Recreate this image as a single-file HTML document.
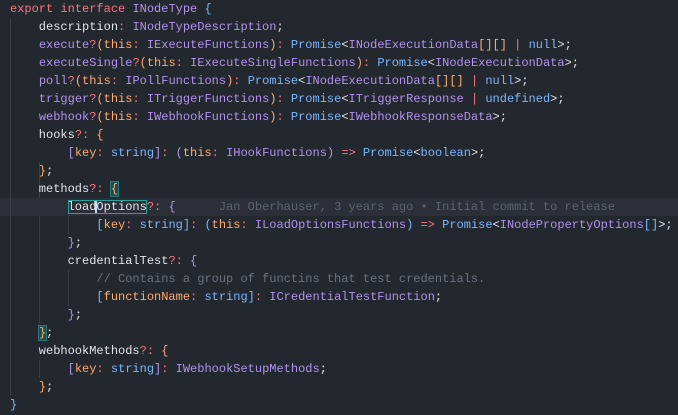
<!DOCTYPE html>
<html><head><style>
html,body{margin:0;padding:0;background:#23272e;width:678px;height:415px;overflow:hidden}
pre{margin:0;padding:0 0 0 10px;font-family:"Liberation Mono",monospace;font-size:12px;line-height:18px;color:#e1e4e8;position:relative}
.k{color:#f97583}.t{color:#b392f0}.b{color:#79b8ff}.o{color:#ffab70}.p{color:#b392f0}.c{color:#6a737d}.g{color:#5c6370}
.hl{position:absolute;left:0;top:198px;width:678px;height:18px;background:#2b3038}
.g1{position:absolute;width:1px;background:#3a3f47}
.cur{outline:1px solid #2aa198;outline-offset:-1px}
.caret{border-left:2px solid #c8d8ff;margin-left:-1px;margin-right:-1px}
.bm{background:#1f4d4d;outline:1px solid #2a7a7a}
</style></head><body>
<div class="hl"></div>
<div class="g1" style="left:10px;top:18px;height:378px"></div>
<div class="g1" style="left:39px;top:162px;height:36px"></div>
<div class="g1" style="left:68px;top:216px;height:18px"></div>
<div class="g1" style="left:68px;top:270px;height:36px"></div>
<div class="g1" style="left:39px;top:216px;height:108px"></div>
<div class="g1" style="left:39px;top:360px;height:18px"></div>
<pre><span class="k">export</span> <span class="k">interface</span> <span class="t">INodeType</span> <span class="b">{</span>
    description<span class="k">:</span> <span class="t">INodeTypeDescription</span>;
    <span class="t">execute</span><span class="k">?</span><span class="o">(this</span><span class="k">:</span> <span class="t">IExecuteFunctions</span><span class="o">)</span><span class="k">:</span> <span class="b">Promise</span>&lt;<span class="t">INodeExecutionData</span><span class="o">[][]</span> <span class="k">|</span> <span class="b">null</span>&gt;;
    <span class="t">executeSingle</span><span class="k">?</span><span class="o">(this</span><span class="k">:</span> <span class="t">IExecuteSingleFunctions</span><span class="o">)</span><span class="k">:</span> <span class="b">Promise</span>&lt;<span class="t">INodeExecutionData</span>&gt;;
    <span class="t">poll</span><span class="k">?</span><span class="o">(this</span><span class="k">:</span> <span class="t">IPollFunctions</span><span class="o">)</span><span class="k">:</span> <span class="b">Promise</span>&lt;<span class="t">INodeExecutionData</span><span class="o">[][]</span> <span class="k">|</span> <span class="b">null</span>&gt;;
    <span class="t">trigger</span><span class="k">?</span><span class="o">(this</span><span class="k">:</span> <span class="t">ITriggerFunctions</span><span class="o">)</span><span class="k">:</span> <span class="b">Promise</span>&lt;<span class="t">ITriggerResponse</span> <span class="k">|</span> <span class="b">undefined</span>&gt;;
    <span class="t">webhook</span><span class="k">?</span><span class="o">(this</span><span class="k">:</span> <span class="t">IWebhookFunctions</span><span class="o">)</span><span class="k">:</span> <span class="b">Promise</span>&lt;<span class="t">IWebhookResponseData</span>&gt;;
    hooks<span class="k">?:</span> <span class="o">{</span>
        <span class="p">[</span><span class="o">key</span><span class="k">:</span> <span class="b">string</span><span class="p">]</span><span class="k">:</span> <span class="p">(</span><span class="o">this</span><span class="k">:</span> <span class="t">IHookFunctions</span><span class="p">)</span> <span class="k">=&gt;</span> <span class="b">Promise</span>&lt;<span class="b">boolean</span>&gt;;
    <span class="o">}</span>;
    methods<span class="k">?:</span> <span class="o bm">{</span>
        <span class="cur">load<span class="caret"></span>Options</span><span class="k">?:</span> <span class="p">{</span>      <span class="g">Jan Oberhauser, 3 years ago • Initial commit to release</span>
            <span class="b">[</span><span class="o">key</span><span class="k">:</span> <span class="b">string</span><span class="b">]</span><span class="k">:</span> <span class="b">(</span><span class="o">this</span><span class="k">:</span> <span class="t">ILoadOptionsFunctions</span><span class="b">)</span> <span class="k">=&gt;</span> <span class="b">Promise</span>&lt;<span class="t">INodePropertyOptions</span><span class="b">[]</span>&gt;;
        <span class="p">}</span>;
        credentialTest<span class="k">?:</span> <span class="p">{</span>
            <span class="c">// Contains a group of functins that test credentials.</span>
            <span class="b">[</span><span class="o">functionName</span><span class="k">:</span> <span class="b">string</span><span class="b">]</span><span class="k">:</span> <span class="t">ICredentialTestFunction</span>;
        <span class="p">}</span>;
    <span class="o bm">}</span>;
    webhookMethods<span class="k">?:</span> <span class="o">{</span>
        <span class="p">[</span><span class="o">key</span><span class="k">:</span> <span class="b">string</span><span class="p">]</span><span class="k">:</span> <span class="t">IWebhookSetupMethods</span>;
    <span class="o">}</span>;
<span class="b">}</span></pre>
</body></html>
